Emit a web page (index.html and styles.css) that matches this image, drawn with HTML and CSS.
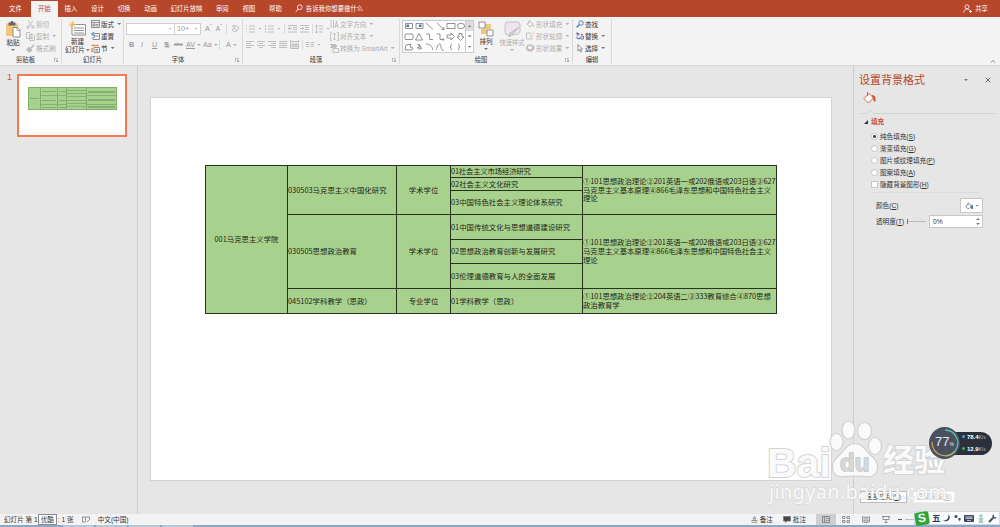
FILE: index.html
```html
<!DOCTYPE html>
<html lang="zh-CN">
<head>
    <meta charset="UTF-8">
    <meta name="viewport" content="width=device-width, initial-scale=1.0">
    <title>演示文稿</title>
    <link rel="stylesheet" href="styles.css">
</head>
<body>
    <div class="window">
        <nav class="tabs">
            <span class="tab file">文件</span>
            <span class="tab active">开始</span>
            <span class="tab">插入</span>
            <span class="tab">设计</span>
            <span class="tab">切换</span>
            <span class="tab">动画</span>
            <span class="tab wide">幻灯片放映</span>
            <span class="tab">审阅</span>
            <span class="tab">视图</span>
            <span class="tab">帮助</span>
            <span class="tell-me">
                <svg width="8" height="9" viewBox="0 0 8 9"><circle cx="4.8" cy="3.2" r="2.4"/><path d="M3.1 5 .7 8"/></svg>
                告诉我你想要做什么
            </span>
            <span class="share">
                <svg width="9" height="9" viewBox="0 0 9 9"><circle cx="4" cy="2.8" r="2"/><path d="M.7 8.5C1 5.8 2.4 5 4 5s2.3.5 2.8 1.5M6 7.5h3M7.5 6v3"/></svg>
                共享
            </span>
        </nav>

        <div class="ribbon">
            <section class="group clipboard">
                <div class="tools">
                    <div class="big">
                        <svg width="16" height="17" viewBox="0 0 16 17">
                            <path d="M1 2.5h12V15H1z" fill="#f0c97f" stroke="none"/><path d="M3.5 1.5h2L6 0h2l.5 1.5h2v3h-7z" fill="#666" stroke="none"/>
                            <path d="M8 6.500h4.500L15 9v7H8z" fill="#fff"/><path d="M12 6.500V9.500h3" stroke-width=".6"/>
                        </svg>
                        <span>粘贴</span>
                        <i class="caret"></i>
                    </div>
                    <div class="stack dim">
                        <span><svg width="9" height="9" viewBox="0 0 9 9"><path d="M2 .5 6 6M7 .5 3 6"/><circle cx="2" cy="7" r="1.2"/><circle cx="7" cy="7" r="1.2"/></svg>剪切</span>
                        <span><svg width="9" height="9" viewBox="0 0 9 9"><path d="M.5.5h3.500l1 1v5H.5zM3.500 2.500h3.500l1.500 1.500v4.500h-5zM5 5h2M5 6.500h2"/></svg>复制 <i class="caret"></i></span>
                        <span><svg width="9" height="9" viewBox="0 0 9 9"><path d="M8 1 5 4" stroke-width="1.5"/><path d="m3 3 3 3-2.500 2.500L.5 6z" fill="#bbb"/></svg>格式刷</span>
                    </div>
                </div>
                <div class="label">剪贴板<b class="launch"></b></div>
            </section>

            <section class="group slides">
                <div class="tools">
                    <div class="big">
                        <svg width="18" height="16" viewBox="0 0 18 16">
                            <path d="M3 3.5h13.500v10.500H3z" fill="#fff"/><path d="M5 7h10M5 9.500h10M5 12h10"/>
                            <path d="M3.500 0v7M0 3.500h7M1 1l5 5M6 1 1 6" stroke="#e8b65a"/>
                        </svg>
                        <span>新建</span>
                        <span>幻灯片<i class="caret"></i></span>
                    </div>
                    <div class="stack">
                        <span><svg width="9" height="8" viewBox="0 0 9 8"><path d="M.5.5h8v7h-8zM.5 2.500h8M2 4h2v2H2zM5 4.500h2.500M5 6h2.500"/></svg>版式<i class="caret"></i></span>
                        <span><svg width="9" height="8" viewBox="0 0 9 8"><path d="M3 1.500h5.500v6H2V5M4.500 4h3"/><path d="M3.500 0 .5 2l3 2.200M1 2c3-.3 3.500 2 1.500 4" stroke="#2c6fb3"/></svg>重置</span>
                        <span><svg width="9" height="9" viewBox="0 0 9 9"><path d="M3 3.500h5.500v5H3zM4.500 5.500h2.500M4.500 7h2.500"/><path d="M.5 1.500h7M1 4v4" stroke="#e58a4f" stroke-width="1.500"/></svg>节<i class="caret"></i></span>
                    </div>
                </div>
                <div class="label">幻灯片</div>
            </section>

            <section class="group font">
                <div class="tools rows">
                    <div class="row">
                        <span class="combo name"><i class="caret"></i></span><span class="combo size">10+<i class="caret"></i></span>
                        <span class="grow">A<sup>ˆ</sup></span><span class="shrink">A<sup>ˇ</sup></span>
                        <i class="sep"></i>
                        <svg width="9" height="9" viewBox="0 0 9 9"><path d="m1 6 4-4.500L8 4 5 7.500H3zM3 4l3 2.500M1 3l2-2 1 2"/></svg>
                    </div>
                    <div class="row letters">
                        <b>B</b><em>I</em><u>U</u><b class="shadow">S</b><s>abc</s><span><u>AV</u><i class="caret"></i></span><span>Aa<i class="caret"></i></span><i class="sep"></i><span>A<i class="caret"></i></span>
                    </div>
                </div>
                <div class="label">字体<b class="launch"></b></div>
            </section>

            <section class="group paragraph">
                <div class="tools">
                    <div class="para">
                        <div class="row">
                            <svg width="9" height="8" viewBox="0 0 9 8"><path d="M0 1h1M0 4h1M0 7h1M3 1h6M3 4h6M3 7h6"/></svg><i class="caret"></i>
                            <svg width="9" height="8" viewBox="0 0 9 8"><path d="M.5 0v2M.5 3v2M.5 6v2M3 1h6M3 4h6M3 7h6"/></svg><i class="caret"></i>
                            <i class="sep"></i>
                            <svg width="9" height="8" viewBox="0 0 9 8"><path d="M0 .5h9M5 2.500h4M5 4.500h4M0 7h9M4 3.500H0M2 2 .5 3.500 2 5"/></svg>
                            <svg width="9" height="8" viewBox="0 0 9 8"><path d="M0 .5h9M5 2.500h4M5 4.500h4M0 7h9M0 3.500h4M2 2l1.500 1.500L2 5"/></svg>
                            <i class="sep"></i>
                            <svg width="8" height="8" viewBox="0 0 8 8"><path d="M1.500 0v8M0 1.500 1.500 0 3 1.500M0 6.500 1.500 8 3 6.500M4 1h4M4 4h4M4 7h4"/></svg><i class="caret"></i>
                        </div>
                        <div class="row">
                            <svg width="8" height="8" viewBox="0 0 8 8"><path d="M0 .5h8M0 2.500h5M0 4.500h8M0 6.500h5"/></svg>
                            <svg width="8" height="8" viewBox="0 0 8 8"><path d="M0 .5h8M2 2.500h4M0 4.500h8M2 6.500h4"/></svg>
                            <svg width="8" height="8" viewBox="0 0 8 8"><path d="M0 .5h8M3 2.500h5M0 4.500h8M3 6.500h5"/></svg>
                            <svg width="8" height="8" viewBox="0 0 8 8"><path d="M0 .5h8M0 2.500h8M0 4.500h8M0 6.500h8"/></svg>
                            <svg width="9" height="9" viewBox="0 0 9 9"><path d="M.5 0v3M8.500 0v3M1 1.500h7M.5 4h8v4.500h-8zM.5 6h8M3 4v4.500M6 4v4.500"/></svg>
                            <i class="sep"></i>
                            <svg width="8" height="8" viewBox="0 0 8 8"><path d="M0 1.500h3.300M0 3.500h3.300M0 5.500h3.300M4.700 1.500H8M4.700 3.500H8M4.700 5.500H8"/></svg><i class="caret"></i>
                        </div>
                    </div>
                    <div class="stack dim">
                        <span><svg width="9" height="9" viewBox="0 0 9 9"><path d="M1 0v8M3.500 0v8M5 8l1.500-7L8 8M5.500 5.500h2"/></svg>文字方向<i class="caret"></i></span>
                        <span><svg width="9" height="9" viewBox="0 0 9 9"><path d="M2 .5H.5v8H2M7 .5h1.500v8H7M4.500 1v7M3 2.500 4.500 1 6 2.500M3 6.500 4.500 8 6 6.500"/></svg>对齐文本<i class="caret"></i></span>
                        <span><svg width="9" height="9" viewBox="0 0 9 9"><path d="M.5.5h5L7 2 5.500 3.500h-5L2 2z" fill="#c7b8c7"/><path d="M3 4.500h5.500v4H3z"/></svg>转换为 SmartArt<i class="caret"></i></span>
                    </div>
                </div>
                <div class="label">段落<b class="launch"></b></div>
            </section>

            <section class="group drawing">
                <div class="tools">
                    <div class="gallery">
                        <svg width="62" height="31" viewBox="0 0 62 31">
                            <g fill="none" stroke="#777" stroke-width=".8">
                                <path d="M2.500 2.500h7v5h-7zM13 2.500h7v5h-7z"/>
                                <path d="m23 2 7 6.500M34 2l7 6.500M41 6v2.500h-2.500M44 2.500h8v5h-8z"/><ellipse cx="58" cy="5" rx="3.600" ry="2.700"/>
                                <rect x="2" y="13" width="8" height="5.500" rx="1"/><path d="m16 12.500 3.500 6.500h-7zM23 13h3.500v5.500H30M33.500 13H37v5.500h4M39.500 17l1.500 1.500-1.500 1.500M44 14h4v-2l3.500 3.500L48 19v-2h-4zM56 12.500h3V16h2l-3.500 3.500L54 16h2z"/>
                                <path d="m3 24-1 5h7l1-2-3-1 1-3zM14 23l3 2-3 2h4l-2 2M16 23l3 5M23 23c4 0 6 2 7 6M33 29c3-8 4-8 5-3s2 3 3 3M49 23c-2 0 0 3-2 3 2 0 0 3 2 3M55 23c2 0 0 3 2 3-2 0 0 3-2 3"/>
                            </g>
                            <path d="M3.500 3.500H6V6H3.500zM16 3.500h2.500V6H16z" fill="#3c78b4" stroke="none"/>
                        </svg>
                        <div class="scroll"><i class="up"></i><i class="caret"></i><i class="caret more"></i></div>
                    </div>
                    <div class="big arrange">
                        <svg width="16" height="16" viewBox="0 0 16 16"><path d="M7 3h6v5H7zM3 8h6v5H3z" fill="#f0c97f" stroke="none"/><path d="M1 1h6v6H1zM9 9h6v6H9z" fill="#fff"/></svg>
                        <span>排列</span>
                        <i class="caret"></i>
                    </div>
                    <div class="big dim">
                        <svg width="17" height="17" viewBox="0 0 17 17"><path d="M4 1h9q3 0 3 3v6q0 2-2 3l-5 1H4q-3 0-3-3V4q0-3 3-3z" fill="#eee6ee"/><path d="m15 6-6 7-4 3 1-4z" fill="#d6d0d6"/></svg>
                        <span>快速样式</span>
                        <i class="caret"></i>
                    </div>
                    <div class="stack dim">
                        <span><svg width="9" height="8" viewBox="0 0 9 8"><path d="m1 4 3-3 3 3-3 3zM3 0v4M7.500 4.500v2.500"/></svg>形状填充<i class="caret"></i></span>
                        <span><svg width="9" height="8" viewBox="0 0 9 8"><path d="M5 1H.5v6h5.500V4.500M8 .5l-4 4.500"/></svg>形状轮廓<i class="caret"></i></span>
                        <span><svg width="9" height="8" viewBox="0 0 9 8"><path d="M2 1h4.500l1.500 2v2L6 7H2L.5 5V3z" fill="#cfc2cf"/><ellipse cx="4" cy="3.500" rx="2.500" ry="2" fill="#fff"/></svg>形状效果<i class="caret"></i></span>
                    </div>
                </div>
                <div class="label">绘图<b class="launch"></b></div>
            </section>

            <section class="group editing">
                <div class="tools">
                    <div class="stack">
                        <span><svg width="8" height="8" viewBox="0 0 8 8"><g stroke="#2c6fb3"><circle cx="5" cy="3" r="2.200"/><path d="M3.300 4.600.6 7.400" stroke-width="1.300"/></g></svg>查找</span>
                        <span><svg width="8" height="8" viewBox="0 0 8 8"><path d="M1 0v3h2V1.500H1M5 4h2.500v3H5zM5 2.500h2" stroke="#7a4b94"/><path d="M1 4.500v2h3M3 5.500l1 1-1 1" stroke="#2c6fb3"/></svg>替换 <i class="caret"></i></span>
                        <span><svg width="8" height="9" viewBox="0 0 8 9"><path d="M2 .5v6.500l1.500-1.500 1 2.500 1-.5-1-2.500h2z" fill="#fff"/></svg>选择<i class="caret"></i></span>
                    </div>
                </div>
                <div class="label">编辑</div>
            </section>
            <svg class="collapse" width="6" height="5" viewBox="0 0 6 5"><path d="m.8 3.500 2.200-2 2.200 2"/></svg>
        </div>

        <main class="workspace">
            <aside class="thumbs">
                <span class="num">1</span>
                <div class="thumb">
                    <div class="mini">
                        <div class="m-school"><i></i></div>
                        <div class="m-col"><i></i><i></i><i></i></div>
                        <div class="m-col short"><i></i><i></i><i></i></div>
                        <div class="m-lines"><i></i><i></i><i></i><i></i><i></i><i></i><i></i></div>
                        <div class="m-col double"><i></i><i></i><i></i></div>
                    </div>
                </div>
            </aside>

            <div class="canvas">
                <div class="slide">
                    <table class="majors">
                        <colgroup><col class="c1"><col class="c2"><col class="c3"><col class="c4"><col class="c5"></colgroup>
                        <tr class="r12">
                            <td rowspan="7" class="center">001马克思主义学院</td>
                            <td rowspan="3">030503马克思主义中国化研究</td>
                            <td rowspan="3" class="center">学术学位</td>
                            <td class="tight">01社会主义市场经济研究</td>
                            <td rowspan="3" class="exam">①101思想政治理论②201英语一或202俄语或203日语③627<br>马克思主义基本原理④866毛泽东思想和中国特色社会主义<br>理论</td>
                        </tr>
                        <tr class="r13"><td>02社会主义文化研究</td></tr>
                        <tr class="r24"><td>03中国特色社会主义理论体系研究</td></tr>
                        <tr class="r25">
                            <td rowspan="3">030505思想政治教育</td>
                            <td rowspan="3" class="center">学术学位</td>
                            <td>01中国传统文化与思想道德建设研究</td>
                            <td rowspan="3" class="exam">①101思想政治理论②201英语一或202俄语或203日语③627<br>马克思主义基本原理④866毛泽东思想和中国特色社会主义<br>理论</td>
                        </tr>
                        <tr class="r24"><td>02思想政治教育创新与发展研究</td></tr>
                        <tr class="r25"><td>03伦理道德教育与人的全面发展</td></tr>
                        <tr class="r25">
                            <td>045102学科教学（思政）</td>
                            <td class="center">专业学位</td>
                            <td>01学科教学（思政）</td>
                            <td class="exam">①101思想政治理论②204英语二③333教育综合④870思想<br>政治教育学</td>
                        </tr>
                    </table>
                </div>
            </div>

            <aside class="pane">
                <header><h2>设置背景格式</h2><i class="caret"></i><svg width="6" height="6" viewBox="0 0 6 6"><path d="m.7.7 4.600 4.600M5.300.7.7 5.300"/></svg></header>
                <svg class="bucket" width="13" height="12" viewBox="0 0 13 12"><path d="m1 6.500 5-5 4.500 4.500-5 5zM4.500 0v4" fill="#fff" stroke="#d2522f" stroke-width=".9"/><path d="M9 3.500c3 0 3.500 2 3 6-1.500-.5-1.500-3-1.500-3.500z" fill="#d2522f" stroke="#d2522f"/></svg>
                <svg class="rule" width="134" height="5" viewBox="0 0 134 5"><path d="M0 4.500h6L9.500.8 13 4.500h121"/></svg>
                <h3>填充</h3>
                <div class="options">
                    <label><i class="radio on"></i>纯色填充(<u>S</u>)</label>
                    <label><i class="radio"></i>渐变填充(<u>G</u>)</label>
                    <label><i class="radio"></i>图片或纹理填充(<u>P</u>)</label>
                    <label><i class="radio"></i>图案填充(<u>A</u>)</label>
                    <label><i class="check"></i>隐藏背景图形(<u>H</u>)</label>
                </div>
                <div class="field color">
                    <span>颜色(<u>C</u>)</span>
                    <div class="picker"><svg width="8" height="8" viewBox="0 0 8 8"><path d="m.8 4 3-2.500L6.500 4 4 6.500H2.500zM3 .5v3" fill="#fff"/><path d="M6.200 3.500h1.300v3H6.200z" fill="#2c6fb3" stroke="#2c6fb3"/></svg><i class="caret"></i></div>
                </div>
                <div class="field">
                    <span>透明度(<u>T</u>)</span>
                    <i class="slider"></i>
                    <div class="spin">0%<span><i class="up"></i><i class="caret"></i></span></div>
                </div>
                <div class="actions"><span class="btn">全部应用(<u>L</u>)</span><span class="btn off">重置背景(<u>B</u>)</span></div>
            </aside>
        </main>

        <footer class="status">
            <span>幻灯片 第 1</span>
            <span class="tip">优酷</span>
            <span class="total">: 1 张</span>
            <svg width="8" height="7" viewBox="0 0 8 7"><path d="M3.500 6H.5V1h3v4.500M4 1h3.500M7.500 1v2.500M5 6l2.500-2.500"/></svg>
            <span>中文(中国)</span>
            <div class="views">
                <span><svg width="7" height="7" viewBox="0 0 7 7"><path d="M.5 4.500h6M.5 6.300h6M3.500.5 2 3h3z"/></svg>备注</span>
                <span><svg width="8" height="7" viewBox="0 0 8 7"><path d="M.5.5h7v4.500H4L2.500 6.500V5h-2z" fill="#444"/></svg>批注</span>
                <span class="view on"><svg width="8" height="7" viewBox="0 0 8 7"><path d="M.5.5h7v6h-7zM2.500.5v6M4 2.500h2.500M4 4.500h2.500"/></svg></span>
                <span class="view"><svg width="8" height="7" viewBox="0 0 8 7"><path d="M.5.5h2.500v2H.5zM5 .5h2.500v2H5zM.5 4.500h2.500v2H.5zM5 4.500h2.500v2H5z"/></svg></span>
                <span class="view"><svg width="8" height="7" viewBox="0 0 8 7"><path d="M.5.800 4 1.500 7.500.8v5L4 6.500.5 5.800zM4 1.500v5M1.500 3h1.500M5 3h1.500M1.500 4.500h1.500M5 4.500h1.500"/></svg></span>
                <span class="view"><svg width="8" height="7" viewBox="0 0 8 7"><path d="M0 .5h8M1 .5v3h6v-3M4 3.500v3M2.500 6.500h3"/></svg></span>
                <span class="zoom"></span>
            </div>
        </footer>
        <div class="taskbar"><i></i><i></i><i></i><i></i></div>

        <div class="wm wm-url">jingyan.baidu.com</div>
        <div class="wm wm-bai">Bai</div>
        <svg class="watermark" width="90" height="70" viewBox="0 0 90 70">
            <g class="paw">
                <ellipse cx="31.500" cy="22" rx="6.500" ry="8.500"/><ellipse cx="43.500" cy="10" rx="6.500" ry="9"/><ellipse cx="59.500" cy="11" rx="7" ry="8.500"/><ellipse cx="70" cy="26" rx="6.500" ry="8.500"/>
                <path d="M50 23.500c-8 0-11 8-17 13-8 6-7 18 1 20 5 1 10-.5 16-.5s11 1.500 16 .5c8-2 9-14 1-20-6-5-9-13-17-13z"/>
            </g>
        </svg>
        <div class="wm wm-du">du</div>
        <div class="wm wm-jy">经验</div>

        <div class="netspeed">
            <div class="speeds"><span class="up-speed">78.4<small>K/s</small></span><span class="down-speed">12.9<small>K/s</small></span></div>
            <div class="ball">
                <svg width="30" height="32" viewBox="0 0 30 32"><path d="M15 3a13 13 0 0 1 10 21" stroke="#4fc5b8"/><path d="M25 24a13 13 0 0 1-14 4" stroke="#a7c46a"/><path d="M11 28a13 13 0 0 1-9-13" stroke="#d6a059"/></svg>
                <span>77<small>%</small></span>
            </div>
        </div>

        <div class="ime">
            <span class="logo">S</span>
            <b>五</b>
            <svg width="8" height="8" viewBox="0 0 8 8"><path d="M5.500 0C9 4 5 9.500 0 6.500 4 6.500 6 4 5.500 0z" fill="#3b4660"/></svg>
            <svg width="7" height="8" viewBox="0 0 7 8"><circle cx="2" cy="2.500" r="1.500" fill="#3b4660"/><path d="M4.500 4h2c.5 2-.5 3-2 3.500l1-1.500h-1z" fill="#3b4660"/></svg>
            <svg width="10" height="7" viewBox="0 0 10 7"><rect width="10" height="7" rx="1" fill="#3b4660"/><path d="M1.500 1.500h7v1h-7zM1.500 3.300h7v.8h-7zM3 5h4v.8H3z" fill="#dfe3ea"/></svg>
            <svg width="8" height="9" viewBox="0 0 8 9"><circle cx="4" cy="2" r="1.800" fill="#a8cdbd"/><path d="M1 4h6L5.500 6l1 3h-5l1-3z" fill="#a8cdbd"/></svg>
            <svg class="wrench" width="9" height="9" viewBox="0 0 9 9"><path d="m1 8 4-4" stroke-width="1.800"/><path d="M5.700 1C4 3 6 5 8 3.500" stroke-width="1.500"/></svg>
        </div>
    </div>
</body>
</html>
```

FILE: styles.css
```css
* {
    box-sizing: border-box;
}
body {
    margin: 0;
    font-family: "Liberation Sans", "Noto Sans CJK SC", sans-serif;
    font-size: 6.6px;
    line-height: 9px;
    color: #333;
    white-space: nowrap;
}
svg {
    flex: none;
    fill: none;
    stroke: #777;
    stroke-width: 0.8;
}
h2, h3 {
    margin: 0;
    font-weight: normal;
}
.window {
    position: relative;
    display: flex;
    flex-direction: column;
    width: 1000px;
    height: 527px;
    overflow: hidden;
    background: #e6e6e6;
}
.caret, .up {
    flex: none;
    display: inline-block;
    width: 4px;
    height: 2px;
    background: #777;
    clip-path: polygon(0 0, 100% 0, 50% 100%);
    vertical-align: middle;
}
.caret {
    margin-left: 2px;
}
.up {
    clip-path: polygon(50% 0, 100% 100%, 0 100%);
}
.sep {
    width: 1px;
    height: 10px;
    background: #dadada;
}

/* tabs */
.tabs {
    display: flex;
    height: 17px;
    background: #b7472a;
    color: #fff;
    font-size: 6.4px;
    line-height: 17px;
}
.tab {
    width: 26.6px;
    text-align: center;
}
.tab.file {
    width: 31px;
}
.tab.active {
    background: #f3f3f3;
    color: #b7472a;
    margin-top: 1px;
    line-height: 15px;
}
.tab.wide {
    width: 45px;
}
.tell-me, .share {
    display: flex;
    align-items: center;
    gap: 3px;
}
.tell-me {
    margin-left: 6px;
}
.share {
    margin-left: auto;
    margin-right: 12px;
}
.tabs svg {
    stroke: #fff;
}

/* ribbon */
.ribbon {
    display: flex;
    position: relative;
    height: 49px;
    background: #f3f3f3;
    border-bottom: 1px solid #d8d8d8;
}
.group {
    display: flex;
    flex-direction: column;
    border-right: 1px solid #dadada;
    margin: 2px 0 1px;
}
.clipboard { width: 62px; }
.slides { width: 62px; }
.font { width: 119px; }
.paragraph { width: 157px; }
.drawing { width: 173px; }
.editing { width: 39px; }
.tools {
    display: flex;
    height: 37px;
}
.label {
    position: relative;
    height: 9px;
    line-height: 9px;
    text-align: center;
    padding-right: 10px;
    font-size: 6.3px;
}
.slides .label, .editing .label {
    padding: 0;
}
.launch {
    position: absolute;
    right: 3px;
    top: 3px;
    width: 4px;
    height: 4px;
    border-top: 1px solid #bbb;
    border-left: 1px solid #bbb;
}
.launch::after {
    content: "";
    position: absolute;
    right: 0;
    bottom: 0;
    width: 2px;
    height: 2px;
    background: #aaa;
}
.big {
    display: flex;
    flex-direction: column;
    align-items: center;
    width: 26px;
    padding-top: 2px;
}
.big span {
    height: 8px;
    line-height: 8px;
}
.big > svg {
    margin-bottom: 1px;
}
.big > .caret {
    margin: 2px 0 0;
}
.stack {
    display: flex;
    flex-direction: column;
    margin-top: -1px;
}
.stack > span {
    display: flex;
    align-items: center;
    gap: 1px;
    height: 12px;
}
.dim {
    color: #adadad;
}
.dim svg {
    stroke: #b5b5b5;
}
.dim .caret, .font .caret, .para .caret {
    background: #b0b0b0;
}
.slides .big {
    width: 29px;
    padding-left: 2px;
}
.slides .big .caret {
    margin-left: 1px;
}
.font .row, .para .row {
    display: flex;
    align-items: center;
    color: #999;
    font-size: 7.2px;
}
.rows {
    flex-direction: column;
    padding: 3px 0 0 2px;
    gap: 3px;
}
.font .row {
    height: 13px;
    gap: 4px;
}
.font .row svg, .para svg {
    stroke: #b0b0b0;
}
.combo {
    display: flex;
    flex: none;
    justify-content: space-between;
    align-items: center;
    height: 12px;
    background: #fff;
    border: 1px solid #d0d0d0;
    padding: 0 2px;
}
.combo.name {
    width: 49px;
    justify-content: flex-end;
}
.combo.size {
    width: 27px;
    margin-left: -5px;
}
.font .letters {
    display: grid;
    grid-template-columns: 12px 11px 12px 10px 12px 17px 16px 7px 14px;
    gap: 0;
    padding-left: 3px;
}
.letters s {
    font-size: 5.5px;
}
.shadow {
    text-shadow: 1px 1px 1px #bbb;
}
.font sup {
    font-size: 6px;
    line-height: 0;
}
.shrink {
    font-size: 6.5px;
}
.para {
    width: 87px;
    padding: 3px 0 0 3px;
}
.para .row {
    height: 13px;
    gap: 3px;
    margin-bottom: 3px;
}
.para .caret {
    margin-left: 0;
}
.gallery {
    display: flex;
    width: 72px;
    height: 33px;
    margin: 1px 0 0 2px;
    background: #fff;
    border: 1px solid #ccc;
}
.scroll {
    display: flex;
    flex-direction: column;
    align-items: center;
    justify-content: space-around;
    width: 8px;
    border-left: 1px solid #ccc;
    background: linear-gradient(#ddd 10px, #fff 10px);
}
.scroll .caret {
    margin: 0;
}
.arrange {
    width: 24px;
}
.drawing .big.dim {
    width: 28px;
    font-size: 6.3px;
}
.editing .stack {
    margin-left: 3px;
}
.collapse {
    position: absolute;
    right: 4px;
    bottom: 1px;
}

/* workspace */
.workspace {
    display: flex;
    height: 448px;
    font-size: 6.6px;
}
.thumbs {
    display: flex;
    width: 138px;
    border-right: 1px solid #cfcfcf;
}
.num {
    width: 17px;
    padding: 7px 0 0 7px;
    color: #d2522f;
    font-size: 9px;
}
.thumb {
    width: 110px;
    height: 63px;
    margin-top: 8px;
    background: #fff;
    border: 2px solid #f47b54;
    padding: 11px 9px;
}
.mini {
    display: grid;
    grid-template-columns: 12px 17px 9px 20px 1fr;
    width: 89px;
    height: 23px;
    background: #a9d18e;
    border: 1px solid #7fae69;
}
.mini > div {
    display: grid;
    border-right: 1px solid #7fae69;
}
.mini > div:last-child {
    border: 0;
}
.m-col {
    grid-template-rows: 8px 1fr 4px;
}
.mini i {
    background: linear-gradient(#86ad72, #86ad72) 1px 50% / 86% 1px no-repeat;
    border-bottom: 1px solid #86b36f;
}
.mini .m-school i, .mini div i:last-child {
    border: 0;
}
.mini .m-lines i {
    background: none;
}
.mini .double i {
    background-size: 94% 2px;
}
.canvas {
    width: 715px;
    padding: 31px 0 0 12px;
}
.slide {
    width: 682px;
    height: 384px;
    background: #fff;
    border: 1px solid #d3d3d3;
    padding: 67px 0 0 54px;
}
.majors {
    table-layout: fixed;
    width: 572px;
    border-collapse: collapse;
    background: #a9d18e;
    color: #1c2617;
    font: 7.4px/8.7px "Noto Sans CJK SC", sans-serif;
}
.c1 { width: 82px; }
.c2 { width: 109px; }
.c3 { width: 54px; }
.c4 { width: 132px; }
.c5 { width: 194px; }
.r12 { height: 12px; }
.r13 { height: 13px; }
.r24 { height: 24px; }
.r25 { height: 25px; }
.majors td {
    border: 1px solid #26331f;
    padding: 0;
}
.majors .center {
    text-align: center;
}
.majors .tight {
    letter-spacing: -0.2px;
}
.majors .exam {
    letter-spacing: -0.06px;
}

/* format pane */
.pane {
    flex: 1;
    border-left: 1px solid #cfcfcf;
    padding: 0 4px 0 5px;
    display: flex;
    flex-direction: column;
}
.pane header {
    display: flex;
    align-items: center;
    height: 20px;
    margin-top: 4px;
}
.pane h2 {
    width: 103px;
    font-size: 11px;
    color: #b7472a;
}
.pane header svg {
    margin-left: 17px;
    stroke: #444;
}
.bucket {
    margin: 2px 0 0 4px;
}
.rule {
    margin: 5px 0 0 2px;
    stroke: #ccc;
}
.pane h3 {
    margin: 3px 0 0 5px;
    font-size: 6.6px;
    font-weight: bold;
    color: #c5502f;
    display: flex;
    align-items: center;
    gap: 3px;
}
.pane h3::before {
    content: "";
    border-left: 4px solid transparent;
    border-bottom: 4px solid #333;
}
.options {
    margin: 4px 16px 0 12px;
    height: 63px;
    border-bottom: 1px solid #dcdcdc;
}
.options label {
    display: flex;
    align-items: center;
    height: 12.2px;
}
.radio, .check {
    width: 7px;
    height: 7px;
    margin-right: 2px;
    background: #fff;
    border: 1px solid #c6c6c6;
}
.radio {
    border-radius: 50%;
}
.radio.on {
    background: radial-gradient(#444 1.2px, #fff 1.7px);
}
.field {
    display: flex;
    align-items: center;
    justify-content: space-between;
    margin: 2px 13px 0 17px;
}
.field.color {
    margin-top: 5px;
}
.picker, .spin {
    display: flex;
    align-items: center;
    background: #fff;
    border: 1px solid #c6c6c6;
}
.picker {
    width: 23px;
    height: 15px;
    padding-left: 4px;
}
.spin {
    width: 54px;
    height: 13px;
    padding: 0 2px 0 3px;
    justify-content: space-between;
}
.spin span {
    display: flex;
    flex-direction: column;
    gap: 3px;
}
.spin .caret {
    margin: 0;
}
.slider {
    width: 19px;
    height: 5px;
    border-left: 1px solid #777;
    background: linear-gradient(#bbb, #bbb) 0 50% / 100% 1px no-repeat;
}
.actions {
    display: flex;
    gap: 6px;
    margin: auto 0 11px 1px;
}
.btn {
    width: 47px;
    height: 12px;
    line-height: 10px;
    background: #fff;
    border: 1px solid #bbb;
    text-align: center;
}
.btn.off {
    width: 42px;
    color: #bbb;
    border-color: #eee;
}

/* status bar */
.status {
    display: flex;
    align-items: center;
    height: 11px;
    background: #f3f3f3;
    padding-left: 4px;
}
.tip {
    width: 19px;
    height: 11px;
    line-height: 9px;
    text-align: center;
    background: #fff;
    border: 1px solid #8a8a8a;
}
.total {
    width: 25px;
    padding-left: 1px;
}
.status > svg {
    margin-right: 8px;
}
.views {
    display: flex;
    align-items: center;
    margin-left: auto;
    margin-right: 84px;
    height: 11px;
}
.views > span {
    display: flex;
    align-items: center;
    gap: 2px;
    margin-right: 10px;
}
.views > .view {
    justify-content: center;
    width: 20px;
    height: 11px;
    margin: 0;
}
.view.on {
    background: #cfcfcf;
}
.views > .zoom {
    width: 18px;
    height: 1px;
    margin: 0 0 0 2px;
    background: linear-gradient(90deg, #555 4px, #f3f3f3 4px, #f3f3f3 7px, #bbb 7px);
}
.taskbar {
    display: flex;
    gap: 2px;
    height: 2px;
    padding-left: 63px;
    background: #8ba9c4;
}
.taskbar i {
    width: 31px;
    background: #b5c8d8;
}

/* floating things */
.watermark {
    position: absolute;
    left: 805px;
    top: 420px;
}
.paw {
    fill: #fff;
    fill-opacity: 0.8;
    stroke: #d0d0d0;
    stroke-width: 1.2;
}
.wm {
    position: absolute;
    color: #fafafa;
    -webkit-text-stroke: 2px #d4d4d4;
    paint-order: stroke fill;
    font-weight: bold;
}
.wm-bai {
    left: 767px;
    top: 442px;
    font-size: 41px;
    line-height: 42px;
}
.wm-du {
    left: 840px;
    top: 450px;
    font-size: 24px;
    line-height: 25px;
    color: #d8d8d8;
    -webkit-text-stroke: 1.5px #c4c4c4;
}
.wm-jy {
    left: 883px;
    top: 443px;
    font-size: 31px;
    line-height: 36px;
}
.wm-url {
    left: 769px;
    top: 480px;
    font: 20px/24px "Noto Sans", sans-serif;
    letter-spacing: 0.3px;
    -webkit-text-stroke: 1px #d2d2d2;
}
.netspeed {
    position: absolute;
    left: 929px;
    top: 427px;
    width: 63px;
    height: 33px;
}
.speeds {
    display: flex;
    flex-direction: column;
    justify-content: space-around;
    height: 23px;
    margin: 5px 0 0 12px;
    padding-left: 26px;
    border-radius: 12px;
    background: #2b303b;
    color: #fff;
    font-weight: bold;
    font-size: 6px;
}
.speeds span::before {
    content: "";
    display: inline-block;
    width: 3px;
    height: 3px;
    border-radius: 50%;
    margin: 0 2px 1px -5px;
    background: #4aa3dd;
}
.speeds .down-speed::before {
    background: #3bb54a;
}
.speeds small {
    font-size: 4.5px;
    color: #999;
}
.ball {
    position: absolute;
    left: 0;
    top: 0;
    display: grid;
    place-items: center;
    width: 31px;
    height: 32px;
    border-radius: 50%;
    background: #4a505d;
    color: #e6eaf0;
    font-size: 13px;
}
.ball > * {
    grid-area: 1 / 1;
}
.ball svg {
    stroke-width: 1.3;
}
.ball small {
    font-size: 5px;
}
.ime {
    position: absolute;
    left: 914px;
    top: 511px;
    display: flex;
    align-items: center;
    justify-content: space-between;
    width: 86px;
    height: 14px;
    padding: 0 2px 0 0;
    background: #fbfcfd;
    border: 1px solid #d4dae0;
    color: #2f3a52;
    font-size: 8.5px;
}
.ime svg {
    stroke: none;
}
.ime .wrench {
    stroke: #3b4660;
}
.logo {
    width: 14px;
    height: 13px;
    line-height: 13px;
    border-radius: 2px;
    background: #2fa436;
    color: #fff;
    font-weight: bold;
    font-size: 12px;
    text-align: center;
    transform: rotate(-8deg);
}
```
